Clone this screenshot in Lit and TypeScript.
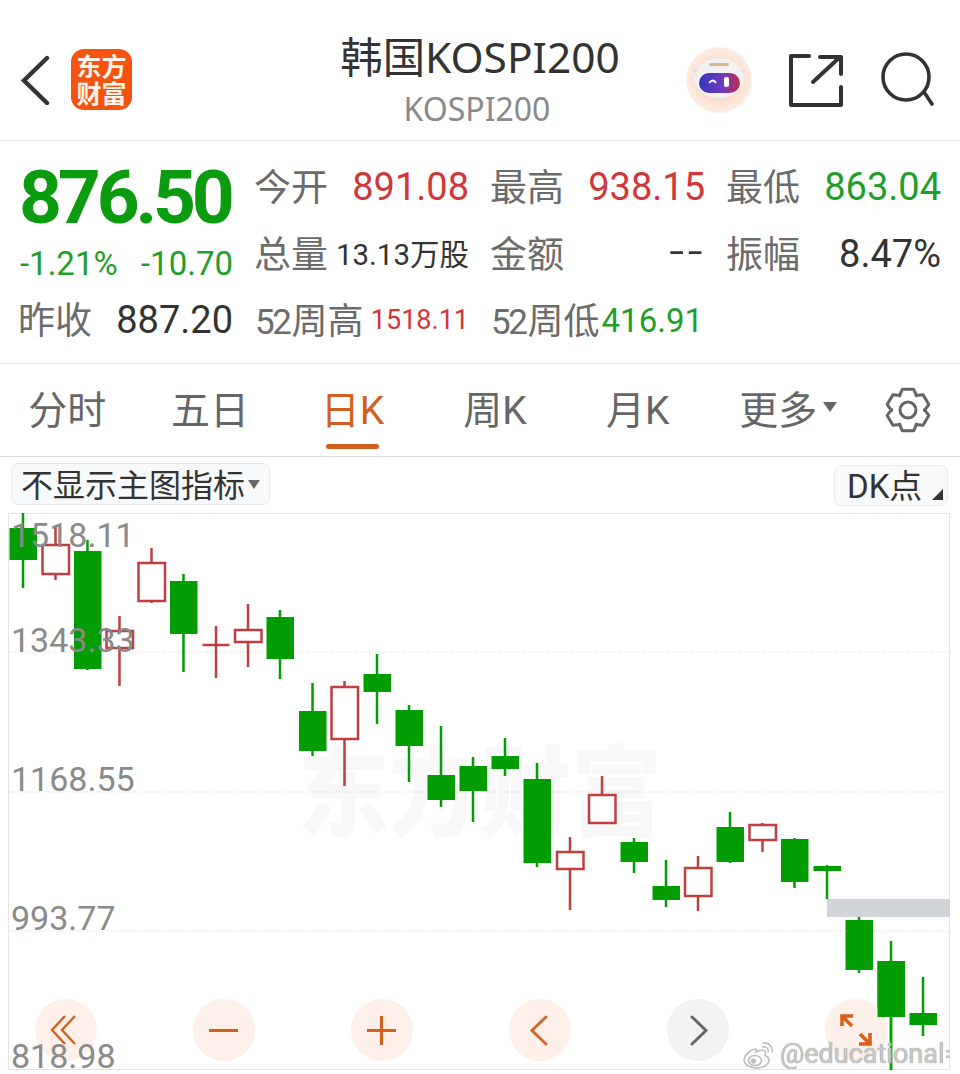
import { LitElement, html, css, svg } from 'lit';
import { customElement } from 'lit/decorators.js';

// cx, wick top, wick bottom, body top, body bottom, hollow (red) or filled (green)
type Candle = [number, number, number, number, number, boolean];

const candles: Candle[] = [
  [23, 513, 588, 528, 560, false],
  [55.5, 527, 580, 545, 574, true],
  [87.5, 540, 670, 551, 669, false],
  [119.5, 616, 686, 631, 648, true],
  [151.5, 548, 603, 563, 601, true],
  [183.5, 574, 672, 581, 634, false],
  [216, 626, 678, 645, 645, true],
  [248, 604, 667, 630, 642, true],
  [280, 610, 679, 617, 659, false],
  [312.5, 683, 756, 711, 751, false],
  [344.5, 681, 786, 687, 739, true],
  [377, 654, 724, 674, 692, false],
  [409, 705, 782, 710, 746, false],
  [441, 726, 807, 775, 800, false],
  [473, 757, 822, 766, 791, false],
  [505, 738, 776, 756, 769, false],
  [537, 763, 867, 779, 863, false],
  [570, 837, 910, 852, 869, true],
  [602, 776, 823, 795, 823, true],
  [634, 838, 873, 842, 862, false],
  [666, 860, 907, 886, 900, false],
  [698, 856, 911, 868, 896, true],
  [730, 812, 863, 827, 862, false],
  [762.5, 823, 852, 825, 840, true],
  [794.5, 838, 888, 839, 882, false],
  [827, 865, 899, 866, 871, false],
  [859, 917, 973, 920, 970, false],
  [891, 941, 1070, 961, 1017, false],
  [923, 977, 1036, 1013, 1025, false],
];

const priceLabels: [string, number][] = [
  ['1518.11', 547],
  ['1343.33', 652],
  ['1168.55', 791],
  ['993.77', 930],
];

const gridLines = [652, 792, 931];

// six-toothed gear outline, centred on 0,0
function gearPath(): string {
  const pts: string[] = [];
  for (let i = 0; i < 6; i++) {
    const a = (i * Math.PI) / 3 - Math.PI / 2;
    const at = (r: number, da: number) =>
      `${(r * Math.cos(a + da)).toFixed(2)} ${(r * Math.sin(a + da)).toFixed(2)}`;
    pts.push(at(16.5, -0.55), at(21.5, -0.27), at(21.5, 0.27), at(16.5, 0.55));
  }
  return `M${pts.join('L')}Z`;
}

@customElement('app-root')
export class AppRoot extends LitElement {
  static styles = css`
    :host {
      display: block;
      width: 960px;
      height: 1074px;
      overflow: hidden;
      background: #fff;
      font-family: Roboto, 'Noto Sans CJK SC', sans-serif;
      color: #333;
    }
    svg {
      display: block;
      flex-shrink: 0;
    }

    .header {
      box-sizing: border-box;
      height: 141px;
      padding-top: 19px;
      border-bottom: 1px solid #e2e2e2;
      display: grid;
      grid-template-columns: 1fr auto 1fr;
      align-items: center;
    }
    .header-left {
      display: flex;
      align-items: center;
      gap: 20px;
      padding-left: 20px;
    }
    .logo {
      box-sizing: border-box;
      width: 61px;
      height: 61px;
      border-radius: 13px;
      background: #f4540f;
      color: #fff4ea;
      font-family: 'Noto Sans CJK SC', sans-serif;
      font-weight: 700;
      font-size: 25px;
      line-height: 27px;
      text-align: center;
      padding-top: 3px;
    }
    .title-block {
      text-align: center;
    }
    .title {
      font-size: 42.4px;
      line-height: 50px;
      color: #333;
      font-family: 'Noto Sans', 'Noto Sans CJK SC', sans-serif;
    }
    .subtitle {
      font-size: 32px;
      line-height: 38px;
      margin-top: 8px;
      padding-right: 6px;
      color: #8a8a8a;
      font-family: 'Noto Sans', sans-serif;
    }
    .header-right {
      display: flex;
      justify-content: flex-end;
      align-items: center;
      gap: 37px;
      padding-right: 24px;
    }

    .stats {
      box-sizing: border-box;
      height: 223px;
      border-bottom: 1px solid #e2e2e2;
      padding: 11px 20px 0;
      display: grid;
      grid-template-columns: repeat(4, 213px);
      column-gap: 23px;
      grid-auto-rows: 66.5px;
      align-items: center;
    }
    .quote {
      grid-row: 1 / span 2;
      display: flex;
      flex-direction: column;
      align-self: start;
      padding-top: 2px;
    }
    .price {
      font-size: 75px;
      line-height: 86px;
      font-weight: 700;
      color: #0a9c0e;
      letter-spacing: -4.2px;
      margin-left: -1px;
      white-space: nowrap;
    }
    .change {
      display: flex;
      justify-content: space-between;
      font-size: 33px;
      line-height: 40px;
      margin-top: 4px;
      color: #1f9e2a;
    }
    .cell {
      display: flex;
      justify-content: space-between;
      align-items: center;
      white-space: nowrap;
      height: 100%;
    }
    .label {
      font-size: 37px;
      color: #6b6b6b;
      margin-left: -2px;
    }
    .label.wk {
      font-size: 36px;
      margin-left: -1px;
    }
    .label .num {
      font-size: 35px;
      letter-spacing: -2.4px;
      margin-right: 2px;
    }
    .value {
      font-size: 38px;
      color: #333;
      margin-top: 4px;
    }
    .value.up {
      color: #d0363a;
    }
    .value.down {
      color: #1f9e2a;
    }
    .value.vol {
      font-size: 29.5px;
      margin-top: 0;
    }
    .value.tiny {
      font-size: 27px;
    }
    .value.low52 {
      font-size: 33px;
      margin-right: 2px;
    }
    .value.dash {
      font-size: 54px;
      font-weight: 300;
      line-height: 1;
      letter-spacing: 3px;
      margin: 0 -1px 0 0;
    }

    .tabs {
      box-sizing: border-box;
      height: 93px;
      border-bottom: 1px solid #dcdcdc;
      display: flex;
      align-items: center;
      margin-left: -4px;
    }
    .tab {
      width: 142.6px;
      height: 100%;
      box-sizing: border-box;
      padding-bottom: 6px;
      display: flex;
      align-items: center;
      justify-content: center;
      font-size: 39px;
      color: #666;
      position: relative;
    }
    .tab.on {
      color: #d2601f;
    }
    .tab.more {
      margin-left: 8px;
    }
    .tab.on::after {
      content: '';
      position: absolute;
      left: 50%;
      margin-left: -26px;
      bottom: 7px;
      width: 53px;
      height: 5px;
      border-radius: 3px;
      background: #d2601f;
    }
    .caret {
      width: 0;
      height: 0;
      border-left: 7px solid transparent;
      border-right: 7px solid transparent;
      border-top: 10px solid #666;
      margin-left: 6px;
    }
    .gear {
      margin-left: auto;
      margin-right: 29px;
    }

    .toolbar {
      height: 56px;
      box-sizing: border-box;
      display: flex;
      justify-content: space-between;
      align-items: flex-start;
      padding: 6px 12px 0 11px;
    }
    .chip {
      box-sizing: border-box;
      display: flex;
      align-items: center;
      height: 42px;
      border: 1px solid #ebebeb;
      border-radius: 7px;
      background: #f8f9fa;
      font-size: 32px;
      color: #333;
      padding: 0 9px 3px 9px;
      white-space: nowrap;
    }
    .chip .caret {
      border-left-width: 6px;
      border-right-width: 6px;
      border-top-width: 9px;
      margin-left: 3px;
      margin-top: 3px;
    }
    .chip.dk {
      position: relative;
      width: 114px;
      height: 41px;
      margin-top: 2px;
      padding-left: 12px;
      font-size: 33px;
    }
    .chip.dk::after {
      content: '';
      position: absolute;
      right: 4px;
      bottom: 5px;
      border-left: 11px solid transparent;
      border-bottom: 11px solid #333;
    }

    .chart {
      position: relative;
      height: 561px;
    }
    .overlay {
      position: absolute;
      left: 0;
      top: 0;
    }
    .chart-text {
      font-family: Roboto, sans-serif;
      font-size: 34px;
      fill: #8a8a8a;
    }
    .stamp {
      font-family: 'Noto Sans CJK SC', sans-serif;
      font-weight: 900;
      font-size: 98px;
      fill: #f8f8f8;
    }
    .zoom-bar {
      position: absolute;
      left: 35px;
      top: 486px;
      display: flex;
      gap: 96px;
    }
    .round {
      width: 62px;
      height: 62px;
      border-radius: 50%;
      background: #fdf0e8;
    }
    .round.off {
      background: #f2f2f2;
    }
    .weibo {
      position: absolute;
      left: 743px;
      top: 524px;
      width: 207px;
      height: 34px;
      overflow: hidden;
      display: flex;
      align-items: center;
      gap: 5px;
      font-size: 27px;
      color: #c8c8c8;
      text-shadow: 0 0 1px #777, 0 0 2px #fff;
      white-space: nowrap;
    }
  `;

  private renderCandles() {
    return candles.map(([cx, wt, wb, bt, bb, hollow]) => {
      if (hollow) {
        return svg`
          <line x1=${cx} x2=${cx} y1=${wt} y2=${wb} stroke="#bf3f40" stroke-width="2.5" />
          ${bt === bb
            ? svg`<line x1=${cx - 13.5} x2=${cx + 13.5} y1=${bt} y2=${bt} stroke="#bf3f40" stroke-width="2.5" />`
            : svg`<rect x=${cx - 13} y=${bt} width="26.5" height=${bb - bt} fill="#fff" stroke="#bf3f40" stroke-width="2.5" />`}
        `;
      }
      return svg`
        <line x1=${cx} x2=${cx} y1=${wt} y2=${wb} stroke="#029c03" stroke-width="2.5" />
        <rect x=${cx - 13.5} y=${bt} width="27.5" height=${bb - bt} fill="#029c03" />
      `;
    });
  }

  private renderChart() {
    return html`
      <svg width="960" height="561" viewBox="0 513 960 561">
        <rect x="8.5" y="513.5" width="941" height="556" fill="#fff" stroke="#e4e4e4" />
        <text class="stamp" x="298" y="828" textLength="364" lengthAdjust="spacingAndGlyphs">东方财富</text>
        ${gridLines.map(
          (y) => svg`<line x1="9" x2="949" y1=${y} y2=${y} stroke="#d6d6d6" stroke-dasharray="1 2" />`
        )}
        ${this.renderCandles()}
        <rect x="827" y="899" width="123" height="18" fill="#d1d4d9" />
        ${priceLabels.map(
          ([t, y]) => svg`<text class="chart-text" x="11" y=${y}>${t}</text>`
        )}
      </svg>
      <div class="zoom-bar">
        <div class="round">
          <svg width="62" height="62" viewBox="0 0 62 62" fill="none" stroke="#d2601f" stroke-width="2.4">
            <path d="M30 17 L17 31 L30 45 M40 17 L27 31 L40 45" />
          </svg>
        </div>
        <div class="round">
          <svg width="62" height="62" viewBox="0 0 62 62" fill="none" stroke="#d2601f" stroke-width="3">
            <path d="M16 31.5 H45" />
          </svg>
        </div>
        <div class="round">
          <svg width="62" height="62" viewBox="0 0 62 62" fill="none" stroke="#d2601f" stroke-width="3">
            <path d="M16 31.5 H45 M30.5 17 V46" />
          </svg>
        </div>
        <div class="round">
          <svg width="62" height="62" viewBox="0 0 62 62" fill="none" stroke="#cf6a2c" stroke-width="3" stroke-linecap="round">
            <path d="M37 18 L23 31.5 L37 45" />
          </svg>
        </div>
        <div class="round off">
          <svg width="62" height="62" viewBox="0 0 62 62" fill="none" stroke="#666" stroke-width="3" stroke-linecap="round">
            <path d="M25 18 L39 31.5 L25 45" />
          </svg>
        </div>
        <div class="round">
          <svg width="62" height="62" viewBox="0 0 62 62" fill="none" stroke="#d95f1c" stroke-width="3.6">
            <path d="M17 27 V17 H28 M17 17 L27 27 M45 34 V45 H34 M45 45 L35 35" />
          </svg>
        </div>
      </div>
      <svg class="overlay" width="960" height="561" viewBox="0 513 960 561">
        <rect x="877.5" y="961" width="27.5" height="56" fill="#029c03" />
        <line x1="891" x2="891" y1="1017" y2="1070" stroke="#029c03" stroke-width="2.5" />
        <text class="chart-text" x="11" y="1068">818.98</text>
      </svg>
      <div class="weibo">
        <svg width="32" height="30" viewBox="0 0 32 30" fill="none" stroke="#bdbdbd" stroke-width="1.6">
          <path d="M13 10 C6 11 1 17 1 21 C1 26 8 29 14 29 C21 29 26 25 26 21 C26 18 23 17 22 16.5 C23 13 22 11 19 11 C17 11 15 12 13 13 C14 11 14 10 13 10 Z" fill="#fff" />
          <ellipse cx="12" cy="21.5" rx="6.5" ry="5" />
          <circle cx="10.5" cy="22" r="1.8" fill="#bdbdbd" />
          <path d="M20 4 C25 3 30 7 29 13 M20 8 C23 7 26 10 25 13" stroke-linecap="round" />
        </svg>
        <span>@educational=</span>
      </div>
    `;
  }

  render() {
    return html`
      <div class="header">
        <div class="header-left">
          <svg width="31" height="50" viewBox="0 0 31 50" fill="none" stroke="#333" stroke-width="4.4" stroke-linecap="round" stroke-linejoin="miter">
            <path d="M27 3 L4 25.5 L27 48" />
          </svg>
          <div class="logo">东方<br />财富</div>
        </div>
        <div class="title-block">
          <div class="title">韩国KOSPI200</div>
          <div class="subtitle">KOSPI200</div>
        </div>
        <div class="header-right">
          <svg width="68" height="68" viewBox="0 0 68 68">
            <defs>
              <radialGradient id="halo">
                <stop offset="0.6" stop-color="#fbdcca" />
                <stop offset="1" stop-color="#fdeee4" />
              </radialGradient>
              <linearGradient id="visor">
                <stop offset="0" stop-color="#3436b8" />
                <stop offset="0.55" stop-color="#6a3ac0" />
                <stop offset="1" stop-color="#c42c4c" />
              </linearGradient>
            </defs>
            <circle cx="35" cy="34" r="33" fill="url(#halo)" />
            <ellipse cx="35" cy="32" rx="25" ry="20" fill="#f3f1f2" />
            <path d="M11 28 l-4 -5 l7 1 Z M59 28 l4 -5 l-7 1 Z" fill="#e6e2e2" />
            <rect x="25" y="17" width="20" height="3" rx="1.5" fill="#d8b98a" />
            <rect x="15" y="27" width="41" height="20" rx="10" fill="url(#visor)" />
            <path d="M25 37 q4 -5 7 0" fill="none" stroke="#fff" stroke-width="1.8" />
            <rect x="40" y="31" width="5" height="10" rx="2" fill="#fff" />
          </svg>
          <svg width="54" height="54" viewBox="0 0 54 54" fill="none" stroke="#333" stroke-width="4" stroke-linejoin="round" stroke-linecap="round">
            <path d="M20 3 H2 V52 H52 V34 M24 29 L51 4 M31 4 H52 V21" />
          </svg>
          <svg width="56" height="56" viewBox="0 0 56 56" fill="none" stroke="#333" stroke-width="3.6" stroke-linecap="round">
            <circle cx="26" cy="25" r="23" />
            <path d="M44 40 L52 52" />
          </svg>
        </div>
      </div>

      <div class="stats">
        <div class="quote">
          <div class="price">876.50</div>
          <div class="change"><span>-1.21%</span><span>-10.70</span></div>
        </div>
        <div class="cell"><span class="label">今开</span><span class="value up">891.08</span></div>
        <div class="cell"><span class="label">最高</span><span class="value up">938.15</span></div>
        <div class="cell"><span class="label">最低</span><span class="value down">863.04</span></div>
        <div class="cell"><span class="label">总量</span><span class="value vol">13.13万股</span></div>
        <div class="cell"><span class="label">金额</span><span class="value dash">--</span></div>
        <div class="cell"><span class="label">振幅</span><span class="value">8.47%</span></div>
        <div class="cell"><span class="label">昨收</span><span class="value">887.20</span></div>
        <div class="cell"><span class="label wk"><span class="num">52</span>周高</span><span class="value up tiny">1518.11</span></div>
        <div class="cell"><span class="label wk"><span class="num">52</span>周低</span><span class="value down low52">416.91</span></div>
      </div>

      <div class="tabs">
        <div class="tab">分时</div>
        <div class="tab">五日</div>
        <div class="tab on">日K</div>
        <div class="tab">周K</div>
        <div class="tab">月K</div>
        <div class="tab more">更多<span class="caret"></span></div>
        <svg class="gear" width="46" height="48" viewBox="-23 -24 46 48" fill="none" stroke="#666" stroke-width="3" stroke-linejoin="round">
          <path d=${gearPath()} />
          <circle r="8" />
        </svg>
      </div>

      <div class="toolbar">
        <div class="chip">不显示主图指标<span class="caret"></span></div>
        <div class="chip dk">DK点</div>
      </div>

      <div class="chart">${this.renderChart()}</div>
    `;
  }
}
